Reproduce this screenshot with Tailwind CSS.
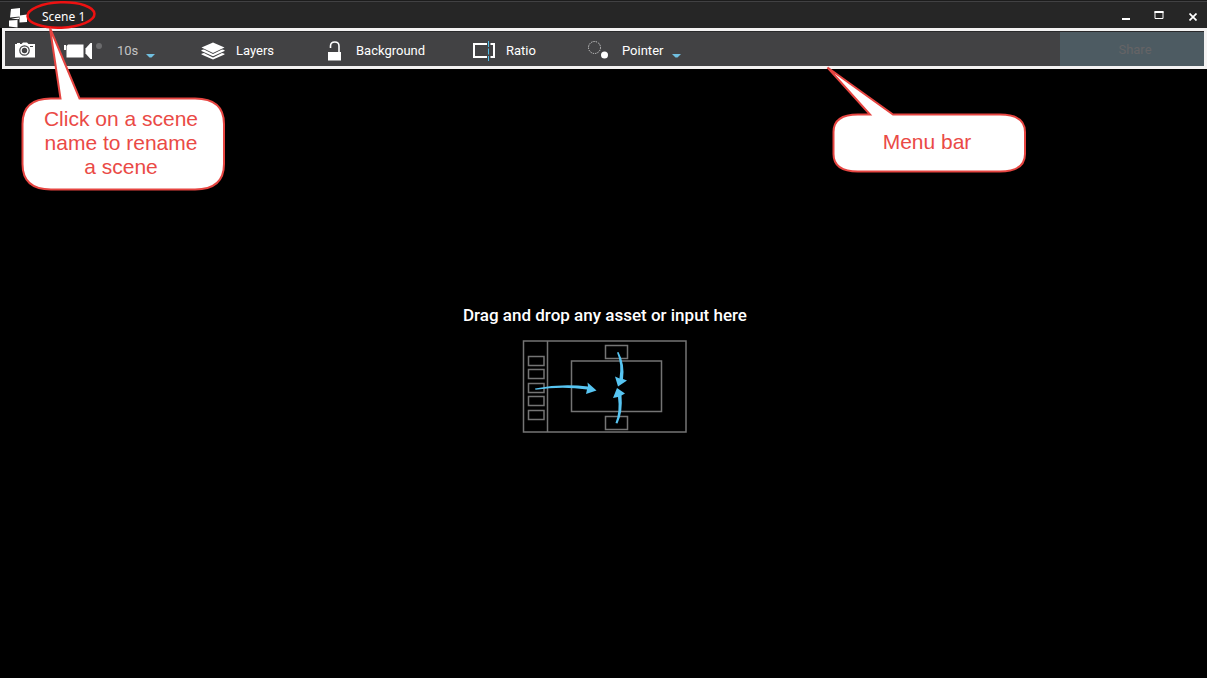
<!DOCTYPE html>
<html lang="en">
<head>
<meta charset="utf-8">
<title>Scene 1</title>
<script src="https://cdn.jsdelivr.net/npm/@tailwindcss/browser@4"></script>
</head>
<body class="relative flex min-h-screen flex-col bg-black font-['Roboto',sans-serif] text-white">
  <header class="flex h-7 items-end justify-between border-t border-[#1c1c1c] bg-[#262626] pl-2 shadow-[inset_0_1px_#414143]">
    <div class="flex items-end">
      <svg class="h-5 w-5" viewBox="0 0 20 20" fill="#fff" aria-hidden="true">
        <path d="M3 1L12 0V8.500L2 9.500Z"/><path d="M11.500 7.500L19 6.500V14L11.500 14.500Z"/><path d="M1 12.500L9.500 12V19.500L1 18.500Z"/><path d="M3 10.500L11 9.500V11L9.500 11.200Z"/>
      </svg>
      <button class="px-3.5 pb-[3px] font-['Noto_Sans',sans-serif] text-xs leading-4">Scene 1</button>
    </div>
    <div class="flex h-full items-center">
      <button class="flex h-6 w-8 items-center justify-center" aria-label="Minimize"><svg class="-translate-x-px" width="10" height="10"><path d="M1 8h8v2H1z" fill="#fff"/></svg></button>
      <button class="flex h-6 w-9 items-center justify-center" aria-label="Maximize"><svg class="-translate-x-0.5" width="10" height="10"><path d="M1 1.500H9V8.500H1Z" fill="none" stroke="#fff"/><path d="M.5 1h9v2h-9z" fill="#fff"/></svg></button>
      <button class="flex h-6 w-7 items-center justify-center" aria-label="Close"><svg class="translate-y-0.5" width="8" height="8"><path d="M.5 .5L7.500 7.500M7.500 .5L.5 7.500" stroke="#fff" stroke-width="1.700"/></svg></button>
    </div>
  </header>

  <nav class="ml-0.5 flex h-[41px] items-stretch border-[3px] border-[#f3f2f2] bg-[#424244] text-[13px] shadow-[inset_0_1px_#29292b]" aria-label="Menu bar">
    <button class="w-[50px] pt-0.5 pl-2.5" aria-label="Take snapshot">
      <svg width="20" height="16" viewBox="0 0 20 16"><path d="M0 2H2V1H5V2H6.500L8 .5H12L13.500 2H20V15.500H0Z" fill="#fff"/><circle cx="9.500" cy="8.500" r="4.700" fill="#fff" stroke="#424244" stroke-width="1.200"/><circle cx="9.500" cy="8.500" r="2.700" fill="#424244"/><path d="M15 4h3v1h-3z" fill="#424244"/></svg>
    </button>
    <button class="w-[50px] pt-1 pl-2" aria-label="Record video">
      <svg width="42" height="20" viewBox="0 0 42 20"><path d="M1 4H3V9H1ZM5 3.500H20.500V16.500H3.500V5Z" fill="#fff"/><path d="M29 2V18H27.500L22.500 12.500V7.500L27.500 2Z" fill="#fff"/><circle cx="36" cy="5" r="3" fill="#6b6b6d"/></svg>
    </button>
    <button class="flex w-[96px] items-center gap-2 pt-1 pl-3 text-[#c2c2c3]">10s
      <svg class="translate-y-1.5" width="9" height="5"><path d="M0 0H9L5.500 3.500H3.500Z" fill="#70bfe0"/></svg>
    </button>
    <button class="flex w-[122px] items-center gap-[11px] pt-1">
      <svg width="24" height="20" viewBox="0 0 24 20" fill="#fff"><path d="M12 1.500L23.500 6.500L12 12L.5 6.500Z"/><path d="M.5 9L3 8.500L12 13L21 8.500L23.500 9V10L12 15.200L.5 10Z"/><path d="M.5 12.700L3 12L12 16.400L21 12L23.500 12.700V13.500L12 18.500L.5 13.500Z"/></svg>
      Layers
    </button>
    <button class="flex w-[150px] items-center gap-3.5 pt-1 pl-[5px]">
      <svg width="14" height="20" viewBox="0 0 14 20"><path d="M0 11H13V19.500H0Z" fill="#fff"/><path d="M2.500 7V5Q2.500 1 6.800 1Q11 1 11 5V11.500" fill="none" stroke="#fff" stroke-width="1.600"/></svg>
      Background
    </button>
    <button class="flex w-[115px] items-center gap-2.5 pt-1">
      <svg width="23" height="20" viewBox="0 0 23 20" fill="none"><path d="M14 3H1V16H14M17.500 3H21V16H17.500" stroke="#fff" stroke-width="2"/><path d="M15.500 0V20" stroke="#4fbce6" stroke-dasharray="6 1.500"/></svg>
      Ratio
    </button>
    <button class="flex items-center gap-[13px] pt-1">
      <svg width="21" height="20" viewBox="0 0 21 20"><circle cx="6.500" cy="6.500" r="6" fill="none" stroke="#ccc" stroke-dasharray="1.400 1"/><circle cx="16.500" cy="14" r="3.500" fill="#fff"/></svg>
      Pointer
      <svg class="-ml-1 translate-y-1.5" width="9" height="5"><path d="M0 0H9L5.500 3.500H3.500Z" fill="#70bfe0"/></svg>
    </button>
    <button class="ml-auto mt-px w-[144px] bg-[#4d5b62] pt-0.5 pl-1.5 text-[#656466]" disabled>Share</button>
  </nav>

  <main class="flex grow flex-col items-center pt-[234px] pl-[3px]">
    <h1 class="text-[17px] leading-6 font-medium">Drag and drop any asset or input here</h1>
    <svg class="mt-3" width="166" height="96" viewBox="522 339 166 96" role="img" aria-label="Assets and inputs moving onto the scene">
      <g fill="none" stroke="#747474" stroke-width="1.500">
        <path d="M523.500 341H686V432H523.500ZM547.500 341V432M571.500 361H661.500V411.500H571.500Z"/>
        <path d="M605.500 345.500H627.500V358.500H605.500ZM605.500 416.500H627.500V429.500H605.500Z"/>
        <path d="M528.500 356.500h15.500v9h-15.500zM528.500 369.500h15.500v9h-15.500zM528.500 383.500h15.500v9h-15.500zM528.500 396.500h15.500v9h-15.500zM528.500 410.500h15.500v9h-15.500z"/>
      </g>
      <g fill="#57c5f2">
        <path d="M535 388.500Q562 383 588 386.500L587.500 382.500L596.500 390.500L586 394L587 389.500Q562 386 535.500 389.800Z"/>
        <path d="M617 352.500L618.500 352Q625 364 623 379L627 380.500L618 386.500L615 376.500L619.500 378.500Q622 364 617 352.500Z"/>
        <path d="M615.500 423L617.500 423.500Q623 412 621.500 395.500L625 393.500L617 388L613 398L618 397Q620 412 615.500 423Z"/>
      </g>
    </svg>
  </main>

  <svg class="pointer-events-none absolute left-6 top-0" width="74" height="30" fill="none" aria-hidden="true"><ellipse cx="37" cy="15" rx="33.500" ry="12.700" stroke="#ed1111" stroke-width="2.500" transform="rotate(-2 37 15)"/></svg>

  <aside class="absolute left-5 top-6 h-[168px] w-[206px] pt-[83px] text-center font-['Liberation_Sans',sans-serif] text-[21px] leading-6 text-[#ea4a46]">
    <svg class="absolute left-0 top-0" width="206" height="168" viewBox="20 24 206 168" aria-hidden="true"><path d="M50 28L79.500 98.500H195Q224 98.500 224 124V164Q224 189.500 195 189.500H51Q22.500 189.500 22.500 164V124Q22.500 98.500 51 98.500H60.500Z" fill="#fff" stroke="#e64541" stroke-width="2"/></svg>
    <p class="relative -ml-1">Click on a scene<br>name to rename<br>a scene</p>
  </aside>

  <aside class="absolute left-[826px] top-16 h-[110px] w-[202px] pt-[66px] text-center font-['Liberation_Sans',sans-serif] text-[21px] leading-6 text-[#ea4a46]">
    <svg class="absolute left-0 top-0" width="202" height="110" viewBox="826 64 202 110" aria-hidden="true"><path d="M827.500 67.500L893 114.500H1000Q1025 114.500 1025 132V154Q1025 171.500 1000 171.500H858Q833.500 171.500 833.500 154V132Q833.500 114.500 858 114.500H870Z" fill="#fff" stroke="#e64541" stroke-width="2"/></svg>
    <p class="relative">Menu bar</p>
  </aside>
</body>
</html>
